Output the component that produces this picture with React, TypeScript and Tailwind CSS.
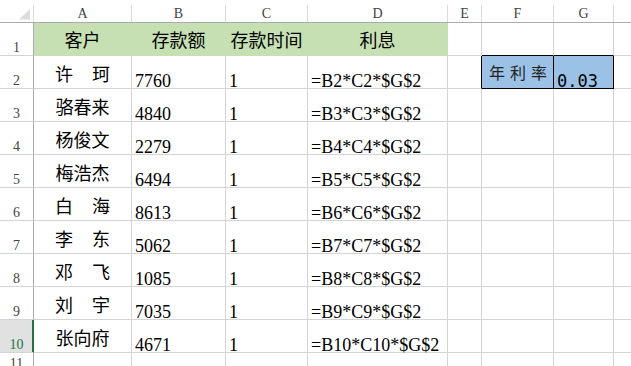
import React from "react";

const W = [
  "w-[34px]",
  "w-[98px]",
  "w-[94px]",
  "w-[82px]",
  "w-[140px]",
  "w-[34px]",
  "w-[72px]",
  "w-[60px]",
  "w-[64px]",
];

const cjk = "font-['Noto_Sans_CJK_SC','Noto_Sans',sans-serif]";
const serif = "font-['Liberation_Serif',serif]";

const rows: { name: string[]; amt: string; n: number }[] = [
  { name: ["许", "珂"], amt: "7760", n: 2 },
  { name: ["骆春来"], amt: "4840", n: 3 },
  { name: ["杨俊文"], amt: "2279", n: 4 },
  { name: ["梅浩杰"], amt: "6494", n: 5 },
  { name: ["白", "海"], amt: "8613", n: 6 },
  { name: ["李", "东"], amt: "5062", n: 7 },
  { name: ["邓", "飞"], amt: "1085", n: 8 },
  { name: ["刘", "宇"], amt: "7035", n: 9 },
  { name: ["张向府"], amt: "4671", n: 10 },
];

function RowHead({ n, selected }: { n: number; selected?: boolean }) {
  return (
    <div
      className={`${W[0]} shrink-0 h-full border-r border-b flex items-end justify-center ${serif} text-[14px] leading-[14px] ${
        selected
          ? "bg-[#e1e1e1] text-[#217346] border-r-[#217346] border-b-[#d4d4d4] shadow-[inset_-1px_0_0_#217346]"
          : "text-[#444] border-r-[#ababab] border-b-[#d4d4d4]"
      }`}
    >
      {n}
    </div>
  );
}

function Num({ w, children, extra = "" }: { w: string; children: React.ReactNode; extra?: string }) {
  return (
    <div
      className={`${w} shrink-0 h-full border-r border-b border-[#d4d4d4] flex items-end pl-[3px] ${serif} text-[18px] leading-[14px] text-black whitespace-nowrap ${extra}`}
    >
      {children}
    </div>
  );
}

function Empty({ w, extra = "border-[#d4d4d4]" }: { w: string; extra?: string }) {
  return <div className={`${w} shrink-0 h-full border-r border-b ${extra}`} />;
}

export default function App() {
  const letters = ["A", "B", "C", "D", "E", "F", "G", ""];
  return (
    <div className="w-[631px] h-[366px] overflow-hidden bg-white flex flex-col">
      {/* column header */}
      <div className="flex h-[23px] shrink-0">
        <div className={`${W[0]} shrink-0 h-full border-b border-[#ababab] pt-[5px]`}>
          <div className="h-full border-r border-[#dadada]">
            <svg width="33" height="17" viewBox="0 0 33 17">
              <polygon points="19,14.5 30,4 30,14.5" fill="#dcdcdc" />
            </svg>
          </div>
        </div>
        {letters.map((l, i) => (
          <div key={i} className={`${W[i + 1]} shrink-0 h-full border-b border-[#ababab] pt-[5px]`}>
            <div
              className={`h-full border-r border-[#dadada] flex justify-center pt-[2px] ${serif} text-[14px] leading-[14px] text-[#444]`}
            >
              {l}
            </div>
          </div>
        ))}
      </div>

      {/* row 1 */}
      <div className="flex h-[33px] shrink-0">
        <RowHead n={1} />
        {["客户", "存款额", "存款时间", "利息"].map((t, i) => (
          <div
            key={t}
            className={`${W[i + 1]} shrink-0 h-full border-r border-b border-[#c6e0b4] bg-[#c6e0b4] flex items-center justify-center ${cjk} text-[18px] leading-[18px] text-black whitespace-nowrap`}
          >
            {t}
          </div>
        ))}
        <Empty w={W[5]} />
        <Empty w={W[6]} extra="border-r-[#d4d4d4] border-b-black" />
        <Empty w={W[7]} extra="border-r-[#d4d4d4] border-b-black" />
        <Empty w={W[8]} />
      </div>

      {rows.map((r) => (
        <div key={r.n} className="flex h-[33px] shrink-0">
          <RowHead n={r.n} selected={r.n === 10} />
          <div
            className={`${W[1]} shrink-0 h-full border-r border-b border-[#d4d4d4] flex items-center justify-center pt-[1px] ${cjk} text-[18px] leading-[18px] text-black`}
          >
            {r.name.length === 2 ? (
              <div className="w-[55px] flex justify-between">
                <span>{r.name[0]}</span>
                <span>{r.name[1]}</span>
              </div>
            ) : (
              <span>{r.name[0]}</span>
            )}
          </div>
          <Num w={W[2]}>{r.amt}</Num>
          <Num w={W[3]}>1</Num>
          <Num w={W[4]}>{`=B${r.n}*C${r.n}*$G$2`}</Num>
          {r.n === 2 ? (
            <>
              <Empty w={W[5]} extra="border-r-black border-b-[#d4d4d4]" />
              <div
                className={`${W[6]} shrink-0 h-full border-r border-b border-black bg-[#9bc2e6] flex items-center justify-center gap-[5px] pl-[1px] ${cjk} text-[16px] leading-[16px] text-[#222]`}
              >
                <span>年</span>
                <span>利</span>
                <span>率</span>
              </div>
              <div
                className={`${W[7]} shrink-0 h-full border-r border-b border-black bg-[#9bc2e6] flex items-end pl-[3px] font-['DejaVu_Sans_Mono',monospace] text-[17px] leading-[14px] text-black`}
              >
                0.03
              </div>
              <Empty w={W[8]} />
            </>
          ) : (
            <>
              <Empty w={W[5]} />
              <Empty w={W[6]} />
              <Empty w={W[7]} />
              <Empty w={W[8]} />
            </>
          )}
        </div>
      ))}

      {/* row 11 */}
      <div className="flex h-[19px] shrink-0">
        <RowHead n={11} />
        {W.slice(1).map((w, i) => (
          <Empty key={i} w={w} />
        ))}
      </div>
    </div>
  );
}
